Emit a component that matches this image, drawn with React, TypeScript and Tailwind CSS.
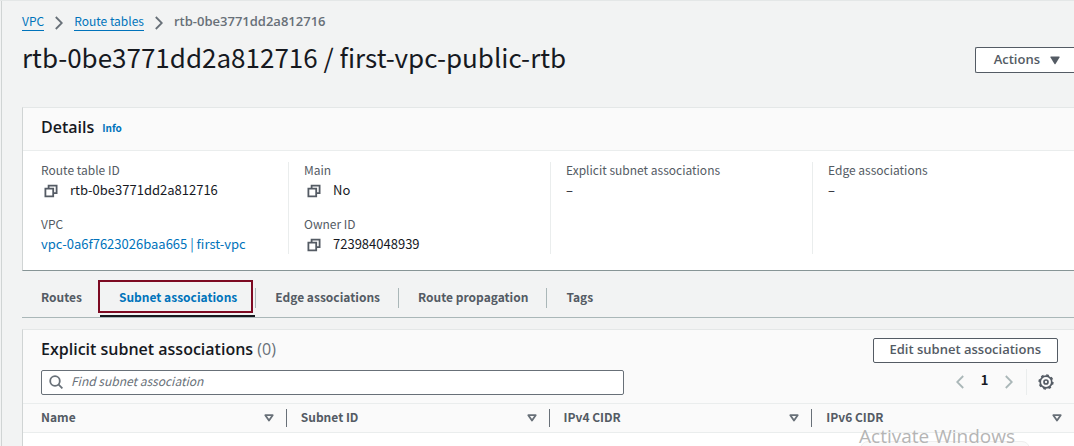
import type { ReactNode } from "react";

function CopyIcon() {
  return (
    <svg width="14" height="14" viewBox="0 0 14 14" fill="none" stroke="#545b64" strokeWidth="1.8" aria-hidden="true">
      <path d="M1.4 4.6h7.8v7.8H1.4z" />
      <path d="M4.6 4.6V1.6h8v7.6H9.2" />
    </svg>
  );
}

function Chevron({ left = false, className = "" }: { left?: boolean; className?: string }) {
  return (
    <svg width="8" height="14" viewBox="0 0 8 14" fill="none" stroke="currentColor" strokeWidth="1.8" className={className} aria-hidden="true">
      <path d={left ? "M7.2 1 1.2 7l6 6" : "M.8 1l6 6-6 6"} />
    </svg>
  );
}

function SearchIcon() {
  return (
    <svg width="14" height="14" viewBox="0 0 14 14" fill="none" stroke="#687078" strokeWidth="1.8" className="shrink-0" aria-hidden="true">
      <circle cx="6" cy="6" r="4.8" />
      <path d="M9.4 9.4l4 4" />
    </svg>
  );
}

function SortIcon() {
  return (
    <svg width="10" height="8" viewBox="0 0 10 8" fill="none" stroke="#687078" strokeWidth="1.8" strokeLinejoin="round" aria-hidden="true">
      <path d="M1.3 1.2h7.4L5 6.6z" />
    </svg>
  );
}

function GearIcon() {
  return (
    <svg width="16" height="16" viewBox="0 0 16 16" fill="none" stroke="#545b64" aria-hidden="true">
      <circle cx="8" cy="8" r="5.8" strokeWidth="1.7" />
      <circle cx="8" cy="8" r="6.9" strokeWidth="1.5" strokeDasharray="2.7 2.72" />
      <circle cx="8" cy="8" r="2" strokeWidth="1.7" />
    </svg>
  );
}

function Field({ label, copy = false, children }: { label: string; copy?: boolean; children: ReactNode }) {
  return (
    <div>
      <dt className="text-xs leading-5 text-[#545b64]">{label}</dt>
      <dd className="flex items-center">
        {copy && (
          <button type="button" aria-label={`Copy ${label}`} className="mt-0.5 ml-[3px] mr-3">
            <CopyIcon />
          </button>
        )}
        {children}
      </dd>
    </div>
  );
}

const tabs = ["Routes", "Subnet associations", "Edge associations", "Route propagation", "Tags"];
const columns = ["Name", "Subnet ID", "IPv4 CIDR", "IPv6 CIDR"];

export default function App() {
  return (
    <div className="relative flex min-h-screen flex-col overflow-hidden border-t border-[#e4e7e7] bg-[#f2f3f3] font-['Noto_Sans_CJK_SC','Open_Sans',sans-serif] text-[13px] leading-5 text-[#16191f]">
      <div className="ml-px flex grow flex-col border-l border-[#d0d4d4] pl-5">
        <nav aria-label="Breadcrumb" className="mt-2.5">
          <ol className="flex items-center gap-[11px]">
            <li>
              <a href="#vpc" className="block border-b border-[#0073bb] text-xs leading-[18px] text-[#0073bb]">VPC</a>
            </li>
            <li><Chevron className="mt-1 text-[#687078]" /></li>
            <li>
              <a href="#route-tables" className="block border-b border-[#0073bb] text-xs leading-[18px] text-[#0073bb]">Route tables</a>
            </li>
            <li><Chevron className="mt-1 text-[#687078]" /></li>
            <li className="font-['Open_Sans',sans-serif] font-semibold text-[#687078]">rtb-0be3771dd2a812716</li>
          </ol>
        </nav>

        <header className="mt-2 flex items-center justify-between">
          <h1 className="text-[26px] leading-9">rtb-0be3771dd2a812716 / first-vpc-public-rtb</h1>
          <button type="button" className="mt-1.5 flex h-[26px] items-center gap-2.5 rounded-l-[2px] border border-r-0 border-[#545b64] bg-white pr-[14px] pb-0.5 pl-[18px] font-['Open_Sans',sans-serif] font-semibold text-[#545b64]">
            Actions
            <svg width="10" height="9" viewBox="0 0 10 9" fill="#545b64" className="mt-0.5" aria-hidden="true">
              <path d="M1 .5h8q1 0 .5 1L5.5 8q-.5.7-1 0L.5 1.5Q0 .5 1 .5z" />
            </svg>
          </button>
        </header>

        <section className="mt-8 border-t border-b border-l border-t-[#e4e7e7] border-b-[#879596] border-l-[#d0d4d4] bg-white">
          <div className="flex h-[43px] items-center gap-2 border-b border-[#eaeded] bg-[#fafafa] pb-1 pl-[18px]">
            <h2 className="font-['Open_Sans',sans-serif] text-base font-semibold">Details</h2>
            <a href="#info" className="mt-0.5 text-[10px] font-semibold text-[#0073bb]">Info</a>
          </div>
          <dl className="mt-[11px] mb-4 ml-[3px] grid grid-cols-4">
            <div className="-mt-0.5 flex flex-col gap-3.5 pl-[15px]">
              <Field label="Route table ID" copy>rtb-0be3771dd2a812716</Field>
              <Field label="VPC">
                <a href="#vpc-detail" className="text-[#0073bb]">vpc-0a6f7623026baa665 | first-vpc</a>
              </Field>
            </div>
            <div className="border-l border-[#eaeded] pl-[15px]">
              <div className="-mt-0.5 flex flex-col gap-3.5">
                <Field label="Main" copy>No</Field>
                <Field label="Owner ID" copy>723984048939</Field>
              </div>
            </div>
            <div className="border-l border-[#eaeded] pl-[15px]">
              <div className="-mt-0.5">
                <Field label="Explicit subnet associations">–</Field>
              </div>
            </div>
            <div className="border-l border-[#eaeded] pl-[15px]">
              <div className="-mt-0.5">
                <Field label="Edge associations">–</Field>
              </div>
            </div>
          </dl>
        </section>

        <div role="tablist" className="flex h-[47px] items-center border-b border-[#aab7b8]">
          {tabs.map((tab, i) => (
            <div key={tab} className="relative flex h-full items-center">
              {i > 1 && <span className="mt-2 h-5 border-l border-[#aab7b8]" />}
              <button
                type="button"
                role="tab"
                aria-selected={i === 1}
                className={`mt-1.5 pr-[18px] pl-[19px] text-xs leading-5 font-semibold ${i === 1 ? "text-[#0073bb]" : "text-[#545b64]"}`}
              >
                {tab}
              </button>
              {i === 1 && (
                <>
                  <span className="absolute inset-x-0 bottom-0 h-0.5 bg-[#16191f]" />
                  <span className="absolute top-[9px] right-0.5 -left-0.5 h-[33px] border-2 border-[#7d0a22]" />
                </>
              )}
            </div>
          ))}
        </div>

        <section className="mt-[11px] flex grow flex-col border-t border-l border-t-[#e4e7e7] border-l-[#d0d4d4] bg-white">
          <div className="bg-[#fafafa] pt-2 pr-4 pb-2 pl-[18px]">
            <div className="flex h-[25px] items-center justify-between">
              <h2 className="pb-1 font-['Open_Sans',sans-serif] text-base font-semibold">
                Explicit subnet associations <span className="font-normal text-[#687078]">(0)</span>
              </h2>
              <button type="button" className="h-[25px] rounded-[2px] border border-[#545b64] bg-white px-4 pb-1 font-['Open_Sans',sans-serif] font-semibold leading-5 text-[#545b64]">
                Edit subnet associations
              </button>
            </div>
            <div className="mt-1.5 flex items-center justify-between">
              <label className="flex h-[25px] w-[583px] items-center gap-2 rounded-[2px] border border-[#687078] bg-white pl-[7px]">
                <SearchIcon />
                <input
                  type="text"
                  aria-label="Find subnet association"
                  placeholder="Find subnet association"
                  className="w-full bg-transparent pb-0.5 text-xs leading-5 outline-none placeholder:text-[#687078] placeholder:italic"
                />
              </label>
              <div className="flex items-center">
                <button type="button" aria-label="Previous page"><Chevron left className="text-[#aab7b8]" /></button>
                <span className="w-[41px] pb-1 text-center font-bold">1</span>
                <button type="button" aria-label="Next page"><Chevron className="text-[#aab7b8]" /></button>
                <span className="mr-[11px] ml-[13px] h-[26px] border-l border-[#eaeded]" />
                <button type="button" aria-label="Preferences" className="mr-1"><GearIcon /></button>
              </div>
            </div>
          </div>
          <table className="w-full table-fixed">
            <thead>
              <tr className="h-[29px] border-y border-[#eaeded] bg-[#fafafa]">
                {columns.map((column, i) => (
                  <th key={column} scope="col" className="p-0 text-left text-xs leading-5 font-semibold text-[#545b64]">
                    <div className={`flex h-[18px] items-center justify-between pr-3 ${i === 0 ? "pl-[18px]" : "border-l border-[#687078] pl-3.5"}`}>
                      <span className="pb-0.5">{column}</span>
                      <button type="button" aria-label={`Sort by ${column}`}><SortIcon /></button>
                    </div>
                  </th>
                ))}
              </tr>
            </thead>
          </table>
        </section>
      </div>
      <div className="absolute right-11 bottom-[-15px] h-5 w-[170px] rounded-lg border border-[#eeeeee] bg-[#fafafa]" />
      <div className="absolute right-[59px] bottom-0 font-['Open_Sans',sans-serif] text-[19px] leading-5 text-[#b5b5b5]">Activate Windows</div>
    </div>
  );
}
